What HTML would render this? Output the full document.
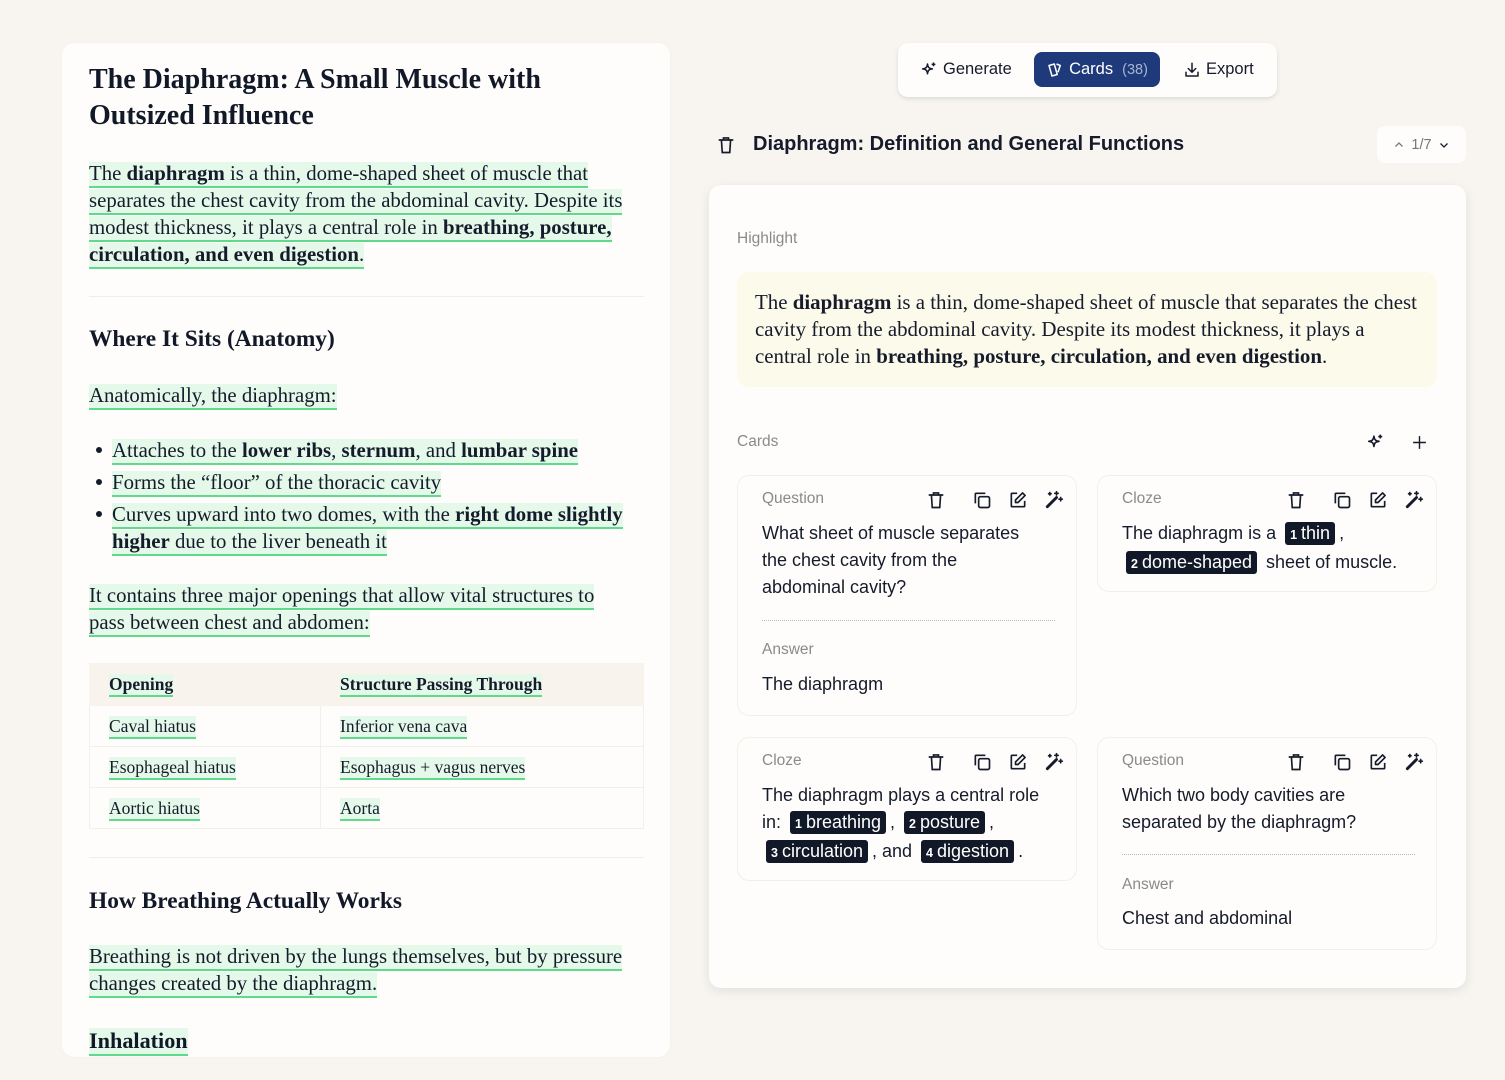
<!DOCTYPE html>
<html><head><meta charset="utf-8">
<style>
*{box-sizing:border-box;margin:0;padding:0}
html,body{width:1505px;height:1080px;overflow:hidden;background:#f8f5f0}
body{position:relative;font-family:"Liberation Sans",sans-serif;color:#161b2b}
#left{position:absolute;left:62px;top:43px;width:608px;height:1014px;background:#fefdfb;border-radius:12px;box-shadow:0 0 2px rgba(0,0,0,.04)}
.l{position:absolute;left:89px;white-space:nowrap;font-family:"Liberation Serif",serif;font-size:20.8px;line-height:26px;color:#161b2b}
.h{background:#e4f9e9;border-bottom:2px solid #5fd98a;padding-bottom:1px}
.t{position:absolute;left:89px;font-family:"Liberation Serif",serif;font-weight:bold;color:#111827;white-space:nowrap}
.hr{position:absolute;left:89px;width:555px;height:1px;background:#f1ede7}
.dot{display:inline-block;width:6px;height:6px;border-radius:50%;background:#161b2b;margin:0 10px 4px 7px;vertical-align:middle}
table{position:absolute;left:89px;top:663px;width:555px;border-collapse:collapse;font-family:"Liberation Serif",serif;font-size:17.5px}
td{height:41px;padding:0 0 0 19px;border:1px solid #f3efea;vertical-align:middle}
tr.hd td{background:#f8f3ed;font-weight:bold;height:42px;border-color:#f8f3ed}
#tb{position:absolute;left:898px;top:43px;width:379px;height:54px;background:#fefdfb;border-radius:10px;box-shadow:0 2px 4px rgba(60,80,80,.15)}
.tbi{position:absolute;top:9px;height:35px;display:flex;align-items:center;font-size:16.5px;color:#161b2b;gap:5px}
#cards{left:136px;width:126px;background:#1e3a7b;color:#fff;border-radius:8px;justify-content:center}
#main{position:absolute;left:709px;top:185px;width:757px;height:803px;background:#fefdfb;border-radius:12px;box-shadow:0 3px 10px rgba(60,80,80,.12)}
.lab{position:absolute;font-size:15.5px;color:#8a8a8a}
#hl{position:absolute;left:737px;top:272px;width:700px;height:115px;background:#fcfaea;border-radius:12px}
.hlt{position:absolute;left:755px;font-family:"Liberation Serif",serif;font-size:20.9px;line-height:27px;white-space:nowrap;color:#161b2b}
.card{position:absolute;width:340px;background:#fefdfb;border:1px solid #f4efe8;border-radius:12px}
.cl{position:absolute;left:24px;top:14px;font-size:15.5px;color:#8a8a8a}
.ic{position:absolute;top:14px}
.ct{position:absolute;left:24px;font-size:18px;line-height:27px;white-space:nowrap;color:#161b2b}
.dl{position:absolute;left:24px;width:293px;border-top:1px dotted #bbb}
.cz{background:#111827;color:#fff;border-radius:3px;padding:1px 5px 2px;margin:0 4px}
.cz b{font-size:12.5px;font-weight:bold;margin-right:4px}
</style></head><body>

<div id="left"></div>
<div class="t" style="top:62px;font-size:28px;line-height:36px">The Diaphragm: A Small Muscle with<br>Outsized Influence</div>

<div class="l" style="top:161px"><span class="h">The <b>diaphragm</b> is a thin, dome-shaped sheet of muscle that</span></div>
<div class="l" style="top:188px"><span class="h">separates the chest cavity from the abdominal cavity. Despite its</span></div>
<div class="l" style="top:215px"><span class="h">modest thickness, it plays a central role in <b>breathing, posture,</b></span></div>
<div class="l" style="top:242px"><span class="h"><b>circulation, and even digestion</b>.</span></div>
<div class="hr" style="top:296px"></div>
<div class="t" style="top:325px;font-size:23.4px;line-height:28px">Where It Sits (Anatomy)</div>
<div class="l" style="top:383px"><span class="h">Anatomically, the diaphragm:</span></div>
<div class="l" style="top:438px;left:89px"><span class="dot"></span><span class="h">Attaches to the <b>lower ribs</b>, <b>sternum</b>, and <b>lumbar spine</b></span></div>
<div class="l" style="top:470px;left:89px"><span class="dot"></span><span class="h">Forms the “floor” of the thoracic cavity</span></div>
<div class="l" style="top:502px;left:89px"><span class="dot"></span><span class="h">Curves upward into two domes, with the <b>right dome slightly</b></span></div>
<div class="l" style="top:529px;left:112px"><span class="h"><b>higher</b> due to the liver beneath it</span></div>
<div class="l" style="top:583px"><span class="h">It contains three major openings that allow vital structures to</span></div>
<div class="l" style="top:610px"><span class="h">pass between chest and abdomen:</span></div>
<table>
<tr class="hd"><td style="width:231px"><span class="h">Opening</span></td><td><span class="h">Structure Passing Through</span></td></tr>
<tr><td><span class="h">Caval hiatus</span></td><td><span class="h">Inferior vena cava</span></td></tr>
<tr><td><span class="h">Esophageal hiatus</span></td><td><span class="h">Esophagus + vagus nerves</span></td></tr>
<tr><td><span class="h">Aortic hiatus</span></td><td><span class="h">Aorta</span></td></tr>
</table>
<div class="hr" style="top:857px"></div>
<div class="t" style="top:887px;font-size:23.4px;line-height:28px">How Breathing Actually Works</div>
<div class="l" style="top:944px"><span class="h">Breathing is not driven by the lungs themselves, but by pressure</span></div>
<div class="l" style="top:971px"><span class="h">changes created by the diaphragm.</span></div>
<div class="t" style="top:1027px;font-size:22.2px;line-height:28px"><span class="h">Inhalation</span></div>

<div id="tb">
 <div class="tbi" style="left:22px"><svg width="18" height="18" viewBox="0 0 24 24" fill="none" stroke="#161b2b" stroke-width="2" stroke-linejoin="round"><path d="M10 4c.6 4.5 2 6 6.5 6.5-4.5.6-5.9 2-6.5 6.5-.6-4.5-2-5.9-6.5-6.5C8 10 9.4 8.5 10 4z"/><path d="M18 2v5M15.5 4.5h5"/></svg>Generate</div>
 <div class="tbi" id="cards"><svg width="18" height="18" viewBox="0 0 24 24" fill="none" stroke="#fff" stroke-width="2" stroke-linejoin="round"><path d="M4 6l7-2 4 14-7 2z"/><path d="M14 4l5 2-3 9"/></svg>Cards <span style="color:#a8b4d2;font-size:14.5px;margin-left:4px">(38)</span></div>
 <div class="tbi" style="left:285px"><svg width="18" height="18" viewBox="0 0 24 24" fill="none" stroke="#161b2b" stroke-width="2" stroke-linecap="round" stroke-linejoin="round"><path d="M12 3v12M7 10l5 5 5-5M4 15v5h16v-5"/></svg>Export</div>
</div>

<svg style="position:absolute;left:716px;top:135px" width="20" height="20" viewBox="0 0 24 24" fill="none" stroke="#161b2b" stroke-width="2" stroke-linecap="round"><path d="M4 6h16M9 6V3.5h6V6M6.5 6l1 15h9l1-15"/></svg>
<div style="position:absolute;left:753px;top:133px;font-size:20px;font-weight:bold;color:#161b2b">Diaphragm: Definition and General Functions</div>
<div style="position:absolute;left:1377px;top:126px;width:89px;height:37px;background:#fefdfb;border-radius:8px;font-size:14.5px;color:#777;display:flex;align-items:center;justify-content:center;gap:6px">
<svg width="12" height="12" viewBox="0 0 24 24" fill="none" stroke="#777" stroke-width="2.5"><path d="M5 15l7-7 7 7"/></svg>1/7<svg width="12" height="12" viewBox="0 0 24 24" fill="none" stroke="#161b2b" stroke-width="2.5"><path d="M5 9l7 7 7-7"/></svg></div>

<div id="main"></div>
<div class="lab" style="left:737px;top:230px">Highlight</div>
<div id="hl"></div>
<div class="hlt" style="top:289px">The <b>diaphragm</b> is a thin, dome-shaped sheet of muscle that separates the chest</div>
<div class="hlt" style="top:316px">cavity from the abdominal cavity. Despite its modest thickness, it plays a</div>
<div class="hlt" style="top:343px">central role in <b>breathing, posture, circulation, and even digestion</b>.</div>

<div class="lab" style="left:737px;top:433px">Cards</div>
<svg style="position:absolute;left:1366px;top:433px" width="19" height="19" viewBox="0 0 24 24" fill="none" stroke="#161b2b" stroke-width="2" stroke-linejoin="round"><path d="M10 4c.6 4.5 2 6 6.5 6.5-4.5.6-5.9 2-6.5 6.5-.6-4.5-2-5.9-6.5-6.5C8 10 9.4 8.5 10 4z"/><path d="M18 2v5M15.5 4.5h5"/></svg>
<svg style="position:absolute;left:1411px;top:434px" width="17" height="17" viewBox="0 0 24 24" fill="none" stroke="#161b2b" stroke-width="2"><path d="M12 3v18M3 12h18"/></svg>

<div class="card" style="left:737px;top:475px;height:241px">
 <div class="cl">Question</div>
 <svg class="ic" style="left:188px" width="20" height="20" viewBox="0 0 24 24" fill="none" stroke="#161b2b" stroke-width="2" stroke-linecap="round"><path d="M4 6h16M9 6V3.5h6V6M6.5 6l1 15h9l1-15"/></svg>
 <svg class="ic" style="left:234px" width="20" height="20" viewBox="0 0 24 24" fill="none" stroke="#161b2b" stroke-width="2"><rect x="8" y="8" width="13" height="13" rx="2"/><path d="M4 16V5a1 1 0 0 1 1-1h11"/></svg>
 <svg class="ic" style="left:270px" width="20" height="20" viewBox="0 0 24 24" fill="none" stroke="#161b2b" stroke-width="2" stroke-linejoin="round"><path d="M11 4H5a1 1 0 0 0-1 1v14a1 1 0 0 0 1 1h14a1 1 0 0 0 1-1v-6"/><path d="M17.5 3.5l3 3L12 15H9v-3z"/></svg>
 <svg class="ic" style="left:306px" width="20" height="20" viewBox="0 0 24 24" fill="none" stroke="#161b2b" stroke-width="2" stroke-linecap="round"><path d="M4 20L15 9" stroke-width="3.5"/><path d="M15 2v4M13 4h4M20 9v4M18 11h4M7 3v3M5.5 4.5h3"/></svg>
 <div class="ct" style="top:44px">What sheet of muscle separates<br>the chest cavity from the<br>abdominal cavity?</div>
 <div class="dl" style="top:144px"></div>
 <div class="cl" style="top:165px">Answer</div>
 <div class="ct" style="top:195px">The diaphragm</div>
</div>

<div class="card" style="left:1097px;top:475px;height:117px">
 <div class="cl">Cloze</div>
 <svg class="ic" style="left:188px" width="20" height="20" viewBox="0 0 24 24" fill="none" stroke="#161b2b" stroke-width="2" stroke-linecap="round"><path d="M4 6h16M9 6V3.5h6V6M6.5 6l1 15h9l1-15"/></svg>
 <svg class="ic" style="left:234px" width="20" height="20" viewBox="0 0 24 24" fill="none" stroke="#161b2b" stroke-width="2"><rect x="8" y="8" width="13" height="13" rx="2"/><path d="M4 16V5a1 1 0 0 1 1-1h11"/></svg>
 <svg class="ic" style="left:270px" width="20" height="20" viewBox="0 0 24 24" fill="none" stroke="#161b2b" stroke-width="2" stroke-linejoin="round"><path d="M11 4H5a1 1 0 0 0-1 1v14a1 1 0 0 0 1 1h14a1 1 0 0 0 1-1v-6"/><path d="M17.5 3.5l3 3L12 15H9v-3z"/></svg>
 <svg class="ic" style="left:306px" width="20" height="20" viewBox="0 0 24 24" fill="none" stroke="#161b2b" stroke-width="2" stroke-linecap="round"><path d="M4 20L15 9" stroke-width="3.5"/><path d="M15 2v4M13 4h4M20 9v4M18 11h4M7 3v3M5.5 4.5h3"/></svg>
 <div class="ct" style="top:44px">The diaphragm is a <span class="cz"><b>1</b>thin</span>,<br><span class="cz" style="margin-left:4px"><b>2</b>dome-shaped</span> sheet of muscle.</div>
</div>

<div class="card" style="left:737px;top:737px;height:144px">
 <div class="cl">Cloze</div>
 <svg class="ic" style="left:188px" width="20" height="20" viewBox="0 0 24 24" fill="none" stroke="#161b2b" stroke-width="2" stroke-linecap="round"><path d="M4 6h16M9 6V3.5h6V6M6.5 6l1 15h9l1-15"/></svg>
 <svg class="ic" style="left:234px" width="20" height="20" viewBox="0 0 24 24" fill="none" stroke="#161b2b" stroke-width="2"><rect x="8" y="8" width="13" height="13" rx="2"/><path d="M4 16V5a1 1 0 0 1 1-1h11"/></svg>
 <svg class="ic" style="left:270px" width="20" height="20" viewBox="0 0 24 24" fill="none" stroke="#161b2b" stroke-width="2" stroke-linejoin="round"><path d="M11 4H5a1 1 0 0 0-1 1v14a1 1 0 0 0 1 1h14a1 1 0 0 0 1-1v-6"/><path d="M17.5 3.5l3 3L12 15H9v-3z"/></svg>
 <svg class="ic" style="left:306px" width="20" height="20" viewBox="0 0 24 24" fill="none" stroke="#161b2b" stroke-width="2" stroke-linecap="round"><path d="M4 20L15 9" stroke-width="3.5"/><path d="M15 2v4M13 4h4M20 9v4M18 11h4M7 3v3M5.5 4.5h3"/></svg>
 <div class="ct" style="top:44px">The diaphragm plays a central role<br>in: <span class="cz"><b>1</b>breathing</span>, <span class="cz"><b>2</b>posture</span>,<br><span class="cz" style="margin-left:4px"><b>3</b>circulation</span>, and <span class="cz"><b>4</b>digestion</span>.</div>
</div>

<div class="card" style="left:1097px;top:737px;height:213px">
 <div class="cl">Question</div>
 <svg class="ic" style="left:188px" width="20" height="20" viewBox="0 0 24 24" fill="none" stroke="#161b2b" stroke-width="2" stroke-linecap="round"><path d="M4 6h16M9 6V3.5h6V6M6.5 6l1 15h9l1-15"/></svg>
 <svg class="ic" style="left:234px" width="20" height="20" viewBox="0 0 24 24" fill="none" stroke="#161b2b" stroke-width="2"><rect x="8" y="8" width="13" height="13" rx="2"/><path d="M4 16V5a1 1 0 0 1 1-1h11"/></svg>
 <svg class="ic" style="left:270px" width="20" height="20" viewBox="0 0 24 24" fill="none" stroke="#161b2b" stroke-width="2" stroke-linejoin="round"><path d="M11 4H5a1 1 0 0 0-1 1v14a1 1 0 0 0 1 1h14a1 1 0 0 0 1-1v-6"/><path d="M17.5 3.5l3 3L12 15H9v-3z"/></svg>
 <svg class="ic" style="left:306px" width="20" height="20" viewBox="0 0 24 24" fill="none" stroke="#161b2b" stroke-width="2" stroke-linecap="round"><path d="M4 20L15 9" stroke-width="3.5"/><path d="M15 2v4M13 4h4M20 9v4M18 11h4M7 3v3M5.5 4.5h3"/></svg>
 <div class="ct" style="top:44px">Which two body cavities are<br>separated by the diaphragm?</div>
 <div class="dl" style="top:116px"></div>
 <div class="cl" style="top:138px">Answer</div>
 <div class="ct" style="top:167px">Chest and abdominal</div>
</div>

</body></html>
